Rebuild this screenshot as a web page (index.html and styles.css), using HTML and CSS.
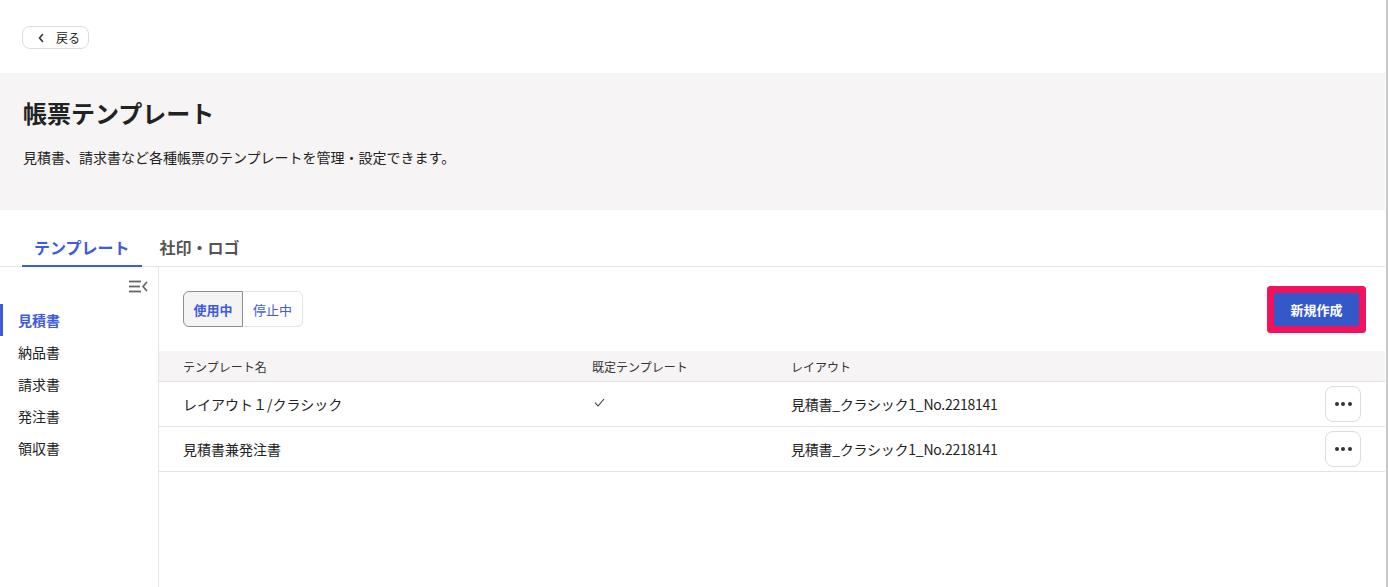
FILE: index.html
```html
<!DOCTYPE html>
<html lang="ja">
<head>
<meta charset="utf-8">
<title>帳票テンプレート</title>
<link rel="stylesheet" href="styles.css">
</head>
<body>
<div class="page">
  <div class="topbar">
    <button class="back-btn">
      <svg class="back-icon" width="8" height="10" viewBox="0 0 8 10"><polyline points="5.5,1.5 2.5,5 5.5,8.5" fill="none" stroke="#333" stroke-width="1.6" stroke-linecap="round" stroke-linejoin="round"/></svg>
      <span>戻る</span>
    </button>
  </div>
  <div class="hero">
    <h1 class="hero-title">帳票テンプレート</h1>
    <p class="hero-desc">見積書、請求書など各種帳票のテンプレートを管理・設定できます。</p>
  </div>
  <div class="tabs">
    <div class="tab tab-active">テンプレート</div>
    <div class="tab">社印・ロゴ</div>
  </div>
  <div class="content">
    <aside class="sidebar">
      <div class="collapse-row">
        <svg width="19" height="13" viewBox="0 0 19 13"><g stroke="#666" stroke-width="1.8" fill="none"><line x1="0" y1="1.5" x2="12" y2="1.5"/><line x1="0" y1="6.5" x2="11" y2="6.5"/><line x1="0" y1="11.5" x2="12" y2="11.5"/><polyline points="17.5,2.5 14,6.5 17.5,10.5" stroke-linejoin="round" stroke-linecap="round"/></g></svg>
      </div>
      <nav class="side-nav">
        <div class="side-item side-active">見積書</div>
        <div class="side-item">納品書</div>
        <div class="side-item">請求書</div>
        <div class="side-item">発注書</div>
        <div class="side-item">領収書</div>
      </nav>
    </aside>
    <main class="main">
      <div class="toolbar">
        <div class="segmented">
          <button class="seg seg-on">使用中</button>
          <button class="seg seg-off">停止中</button>
        </div>
        <div class="new-wrap"><button class="new-btn">新規作成</button></div>
      </div>
      <div class="table">
        <div class="row head">
          <div class="cell">テンプレート名</div>
          <div class="cell">既定テンプレート</div>
          <div class="cell">レイアウト</div>
          <div class="cell"></div>
        </div>
        <div class="row">
          <div class="cell">レイアウト１/クラシック</div>
          <div class="cell"><svg class="check" width="11" height="9" viewBox="0 0 11 9"><polyline points="1,4.5 4,8 10,1" fill="none" stroke="#333" stroke-width="1.1"/></svg></div>
          <div class="cell code">見積書_クラシック1_No.2218141</div>
          <div class="cell cell-end"><button class="more-btn"><i></i><i></i><i></i></button></div>
        </div>
        <div class="row">
          <div class="cell">見積書兼発注書</div>
          <div class="cell"></div>
          <div class="cell code">見積書_クラシック1_No.2218141</div>
          <div class="cell cell-end"><button class="more-btn"><i></i><i></i><i></i></button></div>
        </div>
      </div>
    </main>
  </div>
</div>
<div class="edge"></div>
</body>
</html>
```

FILE: styles.css
```css
* { box-sizing: border-box; }
html, body { margin: 0; padding: 0; }
body {
  display: flex;
  background: #fff;
  color: #222;
  font-family: "Noto Sans CJK JP", "Noto Sans", "Liberation Sans", sans-serif;
  height: 587px;
  overflow: hidden;
}
button { font-family: inherit; cursor: pointer; }
.page { width: 1385px; flex: 0 0 1385px; display: flex; flex-direction: column; height: 587px; }
.edge { width: 3px; flex: 0 0 3px; border-left: 1px solid #fff; background: #c9c9c9; }

.topbar { height: 73px; padding: 26px 22px 0; display: flex; align-items: flex-start; }
.back-btn {
  display: inline-flex; align-items: center; gap: 11px;
  height: 23px; padding: 0 8px 0 14px;
  border: 1px solid #dcdcdc; border-radius: 8px; background: #fff;
  font-size: 12px; color: #222; line-height: 1;
}
.back-icon { display: block; }

.hero { background: #f6f4f4; height: 137px; padding: 24px 23px 0; }
.hero-title { margin: 0; font-size: 24px; line-height: 32px; font-weight: 700; color: #222; }
.hero-desc { margin: 18px 0 0; font-size: 14px; line-height: 20px; color: #222; }

.tabs {
  height: 57px; display: flex; align-items: flex-end; gap: 6px;
  padding-left: 22px; border-bottom: 1px solid #e4e4e4;
}
.tab {
  padding: 0 12px 6px; font-size: 16px; line-height: 24px; font-weight: 700; color: #555;
  border-bottom: 2px solid transparent; margin-bottom: -1px;
}
.tab-active { color: #3d5be0; border-bottom-color: #3d5be0; }

.content { flex: 1; display: flex; }
.sidebar { width: 159px; flex: 0 0 159px; border-right: 1px solid #e4e4e4; }
.collapse-row { display: flex; justify-content: flex-end; padding: 13px 10px 0 0; height: 37px; }
.collapse-row svg { display: block; }
.side-nav { display: flex; flex-direction: column; }
.side-item {
  height: 32px; line-height: 32px; padding-left: 15px; font-size: 14px; color: #222;
  border-left: 3px solid transparent;
}
.side-active { color: #3d5be0; font-weight: 700; border-left-color: #3d5be0; }

.main { flex: 1; display: flex; flex-direction: column; }
.toolbar {
  height: 84px; padding: 0 26px 0 24px;
  display: flex; align-items: center; justify-content: space-between;
}
.segmented { display: flex; height: 36px; }
.seg {
  height: 36px; padding: 0; font-size: 13px; color: #3d5be0; background: #fff;
}
.seg-on {
  width: 60px; border: 1px solid #8e8e8e; border-radius: 6px 0 0 6px;
  background: #f5f4f4; font-weight: 700;
}
.seg-off {
  width: 60px; border: 1px solid #e3e3e3; border-left: none; border-radius: 0 6px 6px 0;
}
.new-wrap { padding-top: 1px; }
.new-btn {
  width: 85px; height: 33px; border: none; border-radius: 1px;
  background: #3558c9; color: #fff; font-size: 13px; font-weight: 700;
  box-shadow: 0 0 0 7px #f2125c;
  outline: none;
}

.table { display: flex; flex-direction: column; }
.row {
  display: grid; grid-template-columns: 409px 199px 1fr 60px;
  padding-left: 24px; height: 45px; align-items: center;
  border-bottom: 1px solid #e4e4e4; font-size: 14px; color: #222;
}
.row.head { height: 31px; background: #f6f4f4; font-size: 12px; color: #333; }
.cell { white-space: nowrap; }
.code { letter-spacing: -0.25px; }
.check { display: block; margin-left: 2px; margin-top: -3px; }
.cell-end { display: flex; justify-content: flex-end; padding-right: 24px; }
.more-btn {
  width: 36px; height: 36px; border: 1px solid #dcdcdc; border-radius: 8px; background: #fff;
  display: flex; align-items: center; justify-content: center; gap: 2.5px; padding: 0;
}
.more-btn i { display: block; width: 4px; height: 4px; border-radius: 50%; background: #333; }
```
